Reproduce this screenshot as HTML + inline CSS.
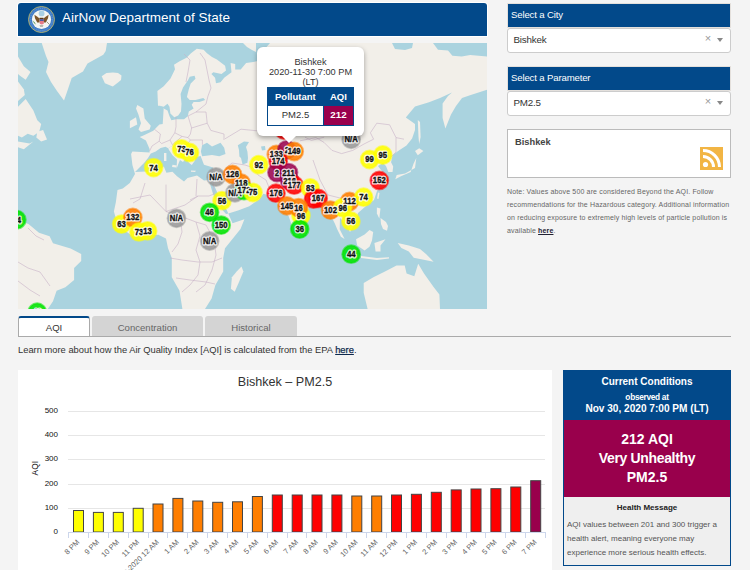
<!DOCTYPE html>
<html><head><meta charset="utf-8">
<style>
*{box-sizing:border-box;margin:0;padding:0}
html,body{width:750px;height:570px;overflow:hidden;background:#f4f4f4;font-family:"Liberation Sans",sans-serif;color:#333}
.abs{position:absolute}
#hdr{left:17px;top:2px;width:471px;height:35px;background:#fff;border-radius:4px 4px 0 0}
#hdr .in{position:absolute;left:1px;top:1px;right:1px;bottom:1px;background:#02498a;border-radius:3px 3px 0 0}
#hdr .t{position:absolute;left:44px;top:7px;font-size:13.5px;color:#fff;white-space:nowrap}
#map{left:18px;top:43px;width:469px;height:266px;overflow:hidden;background:#aad3df}
.sh{background:#02498a;color:#fff;font-size:9.6px;padding-left:3px;line-height:22.5px;letter-spacing:-0.15px;height:25px;border:1px solid #e4e0dc;white-space:nowrap}
.dd{background:#fff;border:1px solid #ccc;border-radius:3px;height:25px;font-size:9.8px;color:#333;line-height:21px;padding-left:5.5px;letter-spacing:-0.2px;position:relative}
.dd .x{position:absolute;right:19px;top:-1px;color:#999;font-size:11px}
.dd .ar{position:absolute;right:7px;top:9px;width:0;height:0;border-left:3px solid transparent;border-right:3px solid transparent;border-top:4px solid #888}
#rss{left:507px;top:129px;width:224px;height:49px;background:#fff;border:1px solid #bbb}
#note{left:507px;top:185px;width:225px;font-size:7px;line-height:13px;color:#666;letter-spacing:0.15px}
.tab{position:absolute;top:316px;height:21px;border-radius:3px 3px 0 0;font-size:9.6px;text-align:center;line-height:24.5px}
#learn{left:18px;top:344.5px;font-size:9.35px;color:#333;white-space:nowrap}
#chart{left:18px;top:370px;width:534px;height:200px;background:#fff}
#cc{left:563px;top:370px;width:168px;height:196px;border:1px solid #02498a;background:#efefef}
</style></head><body>
<div id="hdr" class="abs"><div class="in">
  <svg class="abs" style="left:10px;top:3px" width="27" height="27" viewBox="0 0 27 27">
    <circle cx="13.5" cy="13.5" r="13" fill="#3f7cc6" stroke="#b9b36a" stroke-width="0.9"/>
    <circle cx="13.5" cy="13.5" r="11" fill="none" stroke="#6a9ad8" stroke-width="1" stroke-dasharray="1 1"/>
    <circle cx="13.5" cy="13.5" r="9.6" fill="#f6f6f2"/>
    <circle cx="13.6" cy="7.4" r="2.9" fill="#a9cfe2"/>
    <path d="M6.4 8.7 L9 10.5 L11.6 12.6 L11.6 16.5 L9.2 16.6 L7 12.2Z" fill="#7b5428"/>
    <path d="M20.6 8.7 L18 10.5 L15.4 12.6 L15.4 16.5 L17.8 16.6 L20 12.2Z" fill="#7b5428"/>
    <path d="M11.5 11.8 L15.5 11.8 L15.5 13.3 L11.5 13.3Z" fill="#5b3a18"/>
    <path d="M11.8 13.2 L15.7 13.2 L15.7 17.2 Q13.75 19.6 11.8 17.2Z" fill="#e87a86"/>
    <rect x="11.8" y="13.2" width="3.9" height="1.7" fill="#3a5aa8"/>
    <path d="M4.8 14.4 Q6.5 15.5 8.2 18.8 Q5.8 18 4.8 14.4Z" fill="#3f8a3c"/>
    <path d="M18.5 15.5 L21.5 18.5" stroke="#9a9a8a" stroke-width="1"/>
    <path d="M11.5 19 L15.5 19 L14.8 21 L12.2 21Z" fill="#b8b8b0"/>
  </svg>
  <div class="t">AirNow Department of State</div>
</div></div>

<div id="map" class="abs"><svg width="469" height="266" viewBox="0 0 469 266" style="position:absolute;left:0;top:0">
<polygon points="0.0,13.5 5.8,23.2 12.5,29.0 7.7,36.7 2.0,32.8 0.0,31.0" fill="#f2efe9"/>
<polygon points="0.0,38.6 5.8,46.3 6.8,52.1 0.0,58.0" fill="#f2efe9"/>
<polygon points="0.0,63.7 7.7,56.0 15.4,67.6 19.3,77.2 23.2,81.1 21.2,88.8 15.4,92.7 9.7,90.7 3.9,94.6 0.0,92.7" fill="#f2efe9"/>
<polygon points="19.3,88.8 25.1,86.9 29.0,96.5 23.2,98.5 18.3,94.6" fill="#f2efe9"/>
<polygon points="0.0,98.5 11.6,100.4 15.4,98.5 5.8,106.2 0.0,104.3" fill="#f2efe9"/>
<polygon points="23.7,0.0 26.0,7.0 28.0,13.0 30.5,19.0 28.0,29.0 33.0,39.0 39.0,48.0 46.0,57.5 49.0,49.0 53.7,35.0 65.0,28.4 69.5,20.5 85.3,11.8 87.7,7.9 89.0,0.0" fill="#f2efe9"/>
<polygon points="83.7,33.2 88.5,30.0 95.0,29.5 100.0,30.0 103.5,32.5 103.0,37.0 100.0,39.5 94.8,43.4 86.9,40.3" fill="#f2efe9"/>
<polygon points="119.3,61.9 125.4,65.6 126.7,75.4 132.8,82.8 131.6,86.5 123.0,89.0 120.5,86.5 123.0,80.3 120.5,71.7 118.0,65.6" fill="#f2efe9"/>
<polygon points="111.9,77.9 118.0,74.2 119.3,81.6 111.9,85.3" fill="#f2efe9"/>
<polygon points="225.0,0.0 238.0,0.0 238.0,9.0 234.0,7.0 229.0,4.0" fill="#f2efe9"/>
<polygon points="140.0,62.7 139.4,47.9 145.7,43.3 152.5,35.4 157.0,26.2 156.0,21.7 161.6,18.2 168.5,14.8 173.0,10.3 178.8,5.7 185.6,6.8 189.0,10.3 192.0,12.5 194.0,14.0 198.9,16.4 207.1,22.8 208.0,27.4 203.5,31.0 195.3,29.2 193.4,31.0 197.1,34.7 198.0,40.2 202.6,39.3 206.2,34.7 213.5,29.2 212.6,20.1 217.2,21.0 217.2,26.5 222.7,26.5 228.1,20.1 233.6,19.2 240.0,18.0 246.0,7.0 252.0,0.0 374.0,0.0 377.0,6.0 387.0,7.0 394.0,5.0 395.0,0.0 415.0,0.0 420.0,6.8 430.0,7.6 434.4,12.7 443.7,13.6 452.2,11.9 469.0,13.6 469.0,46.8 452.0,52.3 444.0,55.0 438.0,63.0 433.0,71.6 427.4,85.4 424.6,75.0 424.6,60.6 430.0,53.0 434.0,49.6 422.0,55.0 411.0,59.2 397.0,63.4 387.8,74.6 392.8,78.0 397.0,81.0 397.0,87.0 394.1,95.4 388.5,102.4 380.1,108.0 374.5,112.3 373.1,119.3 375.2,123.5 374.5,129.1 370.3,129.1 368.0,123.0 365.0,120.0 360.0,123.0 366.0,131.0 364.0,139.0 359.0,148.0 356.0,157.0 348.0,163.0 340.0,170.0 338.0,179.0 332.0,189.0 328.0,181.0 322.0,175.0 321.7,186.3 326.6,196.1 322.9,193.7 319.2,186.3 316.7,180.2 313.0,173.0 307.0,167.0 300.0,161.0 294.0,160.0 288.0,169.0 282.0,181.0 278.0,189.0 274.0,183.0 270.7,173.2 263.0,164.0 256.6,157.7 250.0,152.0 245.4,150.7 241.2,156.3 231.3,163.3 220.0,167.6 210.3,170.4 214.5,180.2 226.4,176.3 222.5,186.0 207.0,205.3 205.2,215.0 205.2,228.4 197.4,242.0 193.6,255.5 187.0,266.0 164.4,266.0 161.5,247.7 153.8,234.2 153.8,214.9 150.0,205.3 148.0,195.6 140.3,191.7 115.2,193.7 99.7,182.0 95.9,168.6 97.8,159.5 99.5,147.0 104.8,145.4 111.8,140.0 117.0,131.0 114.4,122.1 113.1,111.0 114.4,108.6 131.6,109.5 131.6,106.1 127.9,97.5 121.7,93.9 125.4,92.6 135.3,87.7 141.4,81.6 144.7,81.1 145.7,65.6 141.8,62.7" fill="#f2efe9"/>
<polygon points="117.0,129.0 127.6,128.5 131.0,129.6 139.0,128.0 145.8,123.6 148.4,129.7 154.5,128.8 159.0,133.2 166.0,138.5 169.5,135.0 179.0,132.4 186.0,137.6 193.0,136.7 195.0,130.0 195.0,124.5 186.0,121.8 182.6,113.0 178.0,114.0 176.5,118.3 173.8,122.0 171.2,120.0 168.0,116.0 164.0,112.0 159.0,106.0 154.9,102.5 150.2,105.2 147.5,103.7 142.6,104.9 137.7,108.6 132.8,110.5 130.0,115.0 126.0,120.0 122.0,124.0" fill="#aad3df"/>
<polygon points="184.1,102.3 189.0,99.8 194.0,103.5 202.5,99.8 206.2,104.7 207.5,110.9 201.3,113.3 194.0,112.1 184.1,113.3 182.9,108.4" fill="#aad3df"/>
<polygon points="219.8,102.2 226.0,98.5 231.0,99.0 228.0,104.0 229.4,108.6 230.0,115.0 229.4,119.8 224.6,121.4 223.0,115.0 221.4,113.4 221.0,107.0" fill="#aad3df"/>
<polygon points="243.0,103.5 247.0,103.0 247.5,107.0 244.0,107.5" fill="#aad3df"/>
<polygon points="141.8,62.7 145.7,63.7 149.5,60.8 151.5,63.7 152.4,70.4 156.3,74.3 160.2,72.4 163.0,68.5 163.5,60.8 162.6,51.1 165.0,44.4 169.8,37.6 171.7,33.8 176.6,32.8 177.5,35.7 172.7,40.5 170.8,46.3 168.9,54.0 171.7,56.9 177.5,56.9 185.3,55.0 187.2,56.9 181.4,58.9 175.6,58.9 173.7,61.7 175.6,65.6 170.8,68.5 169.8,73.3 166.0,76.2 158.2,76.2 153.4,77.2 151.5,73.3 149.5,67.5 145.7,65.6 143.0,64.5" fill="#aad3df"/>
<polygon points="193.0,138.0 196.4,143.0 202.5,157.0 208.7,167.0 210.3,170.4 208.0,171.0 201.0,163.0 195.0,151.0 192.0,141.0" fill="#aad3df"/>
<polygon points="222.0,140.0 230.0,143.0 238.0,148.0 236.0,150.0 228.0,147.0 221.0,143.0" fill="#aad3df"/>
<polygon points="150.2,105.2 154.9,102.5 159.0,107.0 164.0,112.0 167.0,116.0 165.0,119.0 162.0,117.0 160.7,120.0 158.6,125.8 159.0,116.6 154.5,112.2 151.0,107.0" fill="#f2efe9"/>
<polygon points="154.5,121.8 159.0,122.5 158.0,124.5 154.0,124.0" fill="#f2efe9"/>
<polygon points="146.0,110.0 148.4,110.0 148.4,118.0 146.0,118.0" fill="#f2efe9"/>
<polygon points="173.0,127.5 178.0,127.8 177.0,129.0 173.0,128.8" fill="#f2efe9"/>
<polygon points="399.8,77.0 402.0,79.0 402.6,94.0 401.2,101.0 400.5,94.0" fill="#f2efe9"/>
<polygon points="397.0,108.0 401.2,105.3 405.4,108.0 399.8,112.3" fill="#f2efe9"/>
<polygon points="398.3,115.0 397.0,124.9 387.1,130.5 378.7,132.0 377.3,136.2 382.9,133.3 392.7,129.1 395.5,120.7" fill="#f2efe9"/>
<polygon points="360.0,149.5 361.5,150.0 360.5,156.0 359.0,155.5" fill="#f2efe9"/>
<polygon points="358.9,164.4 362.5,165.6 361.3,175.4 358.9,170.5" fill="#f2efe9"/>
<polygon points="362.5,175.0 368.0,179.0 370.0,183.0 369.0,187.7 365.0,186.0 363.0,181.0" fill="#f2efe9"/>
<polygon points="338.0,196.3 346.6,191.4 351.5,187.1 355.2,189.0 354.0,197.5 351.5,203.7 346.6,207.4 339.2,202.5" fill="#f2efe9"/>
<polygon points="356.4,200.0 367.5,196.3 362.5,202.5 362.5,208.6 357.6,208.6" fill="#f2efe9"/>
<polygon points="343.0,213.0 358.9,215.0 371.0,214.2 371.0,215.5 358.9,217.0 343.0,215.0" fill="#f2efe9"/>
<polygon points="379.7,200.0 390.8,202.5 402.0,206.0 408.0,211.0 415.6,218.8 402.0,216.0 395.7,214.7 390.8,208.6 383.4,205.0" fill="#f2efe9"/>
<polygon points="223.5,223.6 225.4,228.4 220.6,240.0 216.7,248.7 212.9,245.8 213.9,234.2 218.7,228.4" fill="#f2efe9"/>
<polygon points="277.0,188.0 280.0,189.0 279.5,193.0 277.0,192.0" fill="#f2efe9"/>
<polygon points="345.7,240.0 355.4,234.2 367.0,228.4 378.5,222.6 386.7,222.6 388.6,230.4 396.3,233.2 400.2,220.7 406.0,230.4 415.6,243.9 421.4,251.6 422.0,266.0 349.6,266.0 345.7,249.7" fill="#f2efe9"/>
<polygon points="0.0,177.5 10.5,181.0 21.0,189.8 31.6,193.3 35.0,200.3 52.6,205.6 63.2,210.9 63.2,218.0 56.1,225.0 56.1,237.0 47.4,244.2 38.6,247.7 35.0,258.2 29.8,266.0 0.0,266.0" fill="#f2efe9"/>
<polyline points="136.4,86.2 142.4,91.0 141.2,98.2 143.6,100.6 152.0,97.0 156.8,89.8 158.0,83.8 158.0,74.2" fill="none" stroke="#c8b2c8" stroke-width="0.6"/>
<polyline points="141.2,98.2 134.0,103.0 131.6,108.0" fill="none" stroke="#c8b2c8" stroke-width="0.6"/>
<polyline points="152.0,97.0 154.4,101.8 164.0,93.4 170.0,94.6 172.4,91.0 173.6,85.0 170.0,73.0" fill="none" stroke="#c8b2c8" stroke-width="0.6"/>
<polyline points="156.8,89.8 164.0,93.4" fill="none" stroke="#c8b2c8" stroke-width="0.6"/>
<polyline points="172.4,97.0 184.4,97.0 184.4,101.8" fill="none" stroke="#c8b2c8" stroke-width="0.6"/>
<polyline points="170.0,94.6 172.4,97.0 168.0,103.0 171.0,109.0 177.0,113.0" fill="none" stroke="#c8b2c8" stroke-width="0.6"/>
<polyline points="173.6,85.0 189.2,80.2 192.8,87.4 206.0,91.0 206.0,97.0" fill="none" stroke="#c8b2c8" stroke-width="0.6"/>
<polyline points="170.0,73.0 178.0,69.0 188.0,61.0 190.0,53.0 193.0,45.0 191.0,37.0 189.0,27.0 187.0,17.0 182.0,10.0" fill="none" stroke="#c8b2c8" stroke-width="0.6"/>
<polyline points="178.0,69.0 188.0,69.0 189.2,80.2" fill="none" stroke="#c8b2c8" stroke-width="0.6"/>
<polyline points="166.0,11.0 172.0,17.0 170.0,29.0 168.0,39.0" fill="none" stroke="#c8b2c8" stroke-width="0.6"/>
<polyline points="207.0,95.8 223.0,86.2 239.0,87.8" fill="none" stroke="#c8b2c8" stroke-width="0.6"/>
<polyline points="287.0,94.2 293.4,97.4 306.2,94.2" fill="none" stroke="#c8b2c8" stroke-width="0.6"/>
<polyline points="282.0,97.8 298.0,94.6 306.0,99.4 314.0,107.4 323.6,110.6 334.8,107.4 346.0,101.0 355.6,96.2 352.4,89.8 358.8,80.2 371.6,81.8 378.0,94.6 386.0,96.2" fill="none" stroke="#c8b2c8" stroke-width="0.6"/>
<polyline points="378.0,94.6 378.0,109.0 373.0,114.0" fill="none" stroke="#c8b2c8" stroke-width="0.6"/>
<polyline points="208.0,125.0 214.0,120.0 227.0,122.0 236.0,125.0 240.0,132.0 248.0,137.0 252.0,147.0" fill="none" stroke="#c8b2c8" stroke-width="0.6"/>
<polyline points="195.0,132.0 196.0,151.0 191.0,153.0 180.0,153.0 172.0,157.0" fill="none" stroke="#c8b2c8" stroke-width="0.6"/>
<polyline points="179.0,136.0 178.0,153.0" fill="none" stroke="#c8b2c8" stroke-width="0.6"/>
<polyline points="148.0,141.6 148.0,168.5" fill="none" stroke="#c8b2c8" stroke-width="0.6"/>
<polyline points="112.0,156.0 132.0,152.0 148.0,168.5 162.0,173.0 178.0,179.0 188.0,182.0" fill="none" stroke="#c8b2c8" stroke-width="0.6"/>
<polyline points="127.0,140.0 122.0,156.0 115.0,160.0" fill="none" stroke="#c8b2c8" stroke-width="0.6"/>
<polyline points="148.0,168.5 167.0,162.0 180.0,153.0" fill="none" stroke="#c8b2c8" stroke-width="0.6"/>
<polyline points="162.0,173.0 164.0,189.0 160.0,201.0 154.0,209.0" fill="none" stroke="#c8b2c8" stroke-width="0.6"/>
<polyline points="178.0,179.0 182.0,193.0 178.0,207.0 182.0,219.0 180.0,232.0 172.0,242.0 164.0,249.0" fill="none" stroke="#c8b2c8" stroke-width="0.6"/>
<polyline points="188.0,182.0 196.0,197.0 198.0,212.0 194.0,227.0 187.0,242.0 178.0,249.0" fill="none" stroke="#c8b2c8" stroke-width="0.6"/>
<polyline points="152.0,215.0 164.0,217.0 180.0,219.0 194.0,219.0 204.0,215.0" fill="none" stroke="#c8b2c8" stroke-width="0.6"/>
<polyline points="158.0,235.0 172.0,237.0 188.0,239.0 197.0,241.0" fill="none" stroke="#c8b2c8" stroke-width="0.6"/>
<polyline points="295.0,117.0 302.0,137.0 310.0,152.0 322.0,155.0" fill="none" stroke="#c8b2c8" stroke-width="0.6"/>
<polyline points="330.0,155.0 334.0,167.0 326.0,171.0" fill="none" stroke="#c8b2c8" stroke-width="0.6"/>
<polyline points="10.0,185.0 18.0,193.0 26.0,197.0" fill="none" stroke="#c8b2c8" stroke-width="0.6"/>
<polyline points="0.0,219.0 10.0,225.0 22.0,229.0 32.0,243.0" fill="none" stroke="#c8b2c8" stroke-width="0.6"/>
<polyline points="0.0,238.0 12.0,247.0 22.0,253.0" fill="none" stroke="#c8b2c8" stroke-width="0.6"/>
<circle cx="-1.2" cy="176.7" r="8.9" fill="#00e400" fill-opacity="0.88" stroke="#00e400" stroke-opacity="0.55" stroke-width="2"/>
<circle cx="19.2" cy="269.2" r="8.9" fill="#00e400" fill-opacity="0.88" stroke="#00e400" stroke-opacity="0.55" stroke-width="2"/>
<circle cx="135.6" cy="124.6" r="8.9" fill="#ffff00" fill-opacity="0.88" stroke="#ffff00" stroke-opacity="0.55" stroke-width="2"/>
<circle cx="163.6" cy="106.0" r="8.9" fill="#ffff00" fill-opacity="0.88" stroke="#ffff00" stroke-opacity="0.55" stroke-width="2"/>
<circle cx="171.5" cy="109.5" r="8.9" fill="#ffff00" fill-opacity="0.88" stroke="#ffff00" stroke-opacity="0.55" stroke-width="2"/>
<circle cx="198.0" cy="134.0" r="8.9" fill="#9a9a9a" fill-opacity="0.88" stroke="#9a9a9a" stroke-opacity="0.55" stroke-width="2"/>
<circle cx="103.6" cy="181.1" r="8.9" fill="#ffff00" fill-opacity="0.88" stroke="#ffff00" stroke-opacity="0.55" stroke-width="2"/>
<circle cx="114.8" cy="174.4" r="8.9" fill="#ff7e00" fill-opacity="0.88" stroke="#ff7e00" stroke-opacity="0.55" stroke-width="2"/>
<circle cx="121.0" cy="188.9" r="8.9" fill="#ffff00" fill-opacity="0.88" stroke="#ffff00" stroke-opacity="0.55" stroke-width="2"/>
<circle cx="129.6" cy="187.9" r="8.9" fill="#ffff00" fill-opacity="0.88" stroke="#ffff00" stroke-opacity="0.55" stroke-width="2"/>
<circle cx="158.5" cy="175.3" r="8.9" fill="#9a9a9a" fill-opacity="0.88" stroke="#9a9a9a" stroke-opacity="0.55" stroke-width="2"/>
<circle cx="191.6" cy="198.0" r="8.9" fill="#9a9a9a" fill-opacity="0.88" stroke="#9a9a9a" stroke-opacity="0.55" stroke-width="2"/>
<circle cx="204.0" cy="157.7" r="8.9" fill="#ffff00" fill-opacity="0.88" stroke="#ffff00" stroke-opacity="0.55" stroke-width="2"/>
<circle cx="191.6" cy="169.3" r="8.9" fill="#00e400" fill-opacity="0.88" stroke="#00e400" stroke-opacity="0.55" stroke-width="2"/>
<circle cx="203.2" cy="182.1" r="8.9" fill="#00e400" fill-opacity="0.88" stroke="#00e400" stroke-opacity="0.55" stroke-width="2"/>
<circle cx="214.5" cy="131.4" r="8.9" fill="#ff7e00" fill-opacity="0.88" stroke="#ff7e00" stroke-opacity="0.55" stroke-width="2"/>
<circle cx="223.2" cy="140.2" r="8.9" fill="#ff7e00" fill-opacity="0.88" stroke="#ff7e00" stroke-opacity="0.55" stroke-width="2"/>
<circle cx="217.0" cy="149.8" r="8.9" fill="#9a9a9a" fill-opacity="0.88" stroke="#9a9a9a" stroke-opacity="0.55" stroke-width="2"/>
<circle cx="226.0" cy="147.5" r="8.9" fill="#00e400" fill-opacity="0.88" stroke="#00e400" stroke-opacity="0.55" stroke-width="2"/>
<circle cx="235.0" cy="149.5" r="8.9" fill="#ffff00" fill-opacity="0.88" stroke="#ffff00" stroke-opacity="0.55" stroke-width="2"/>
<circle cx="240.8" cy="121.7" r="8.9" fill="#ffff00" fill-opacity="0.88" stroke="#ffff00" stroke-opacity="0.55" stroke-width="2"/>
<circle cx="266.0" cy="87.0" r="8.9" fill="#ff0000" fill-opacity="0.88" stroke="#ff0000" stroke-opacity="0.55" stroke-width="2"/>
<circle cx="258.3" cy="111.4" r="8.9" fill="#ff7e00" fill-opacity="0.88" stroke="#ff7e00" stroke-opacity="0.55" stroke-width="2"/>
<circle cx="268.8" cy="106.8" r="8.9" fill="#99004c" fill-opacity="0.85" stroke="#99004c" stroke-opacity="0.55" stroke-width="2"/>
<circle cx="276.2" cy="108.5" r="8.9" fill="#ff7e00" fill-opacity="0.88" stroke="#ff7e00" stroke-opacity="0.55" stroke-width="2"/>
<circle cx="260.2" cy="118.2" r="8.9" fill="#ff0000" fill-opacity="0.88" stroke="#ff0000" stroke-opacity="0.55" stroke-width="2"/>
<circle cx="259.0" cy="129.6" r="8.9" fill="#99004c" fill-opacity="0.85" stroke="#99004c" stroke-opacity="0.55" stroke-width="2"/>
<circle cx="270.5" cy="129.6" r="8.9" fill="#99004c" fill-opacity="0.85" stroke="#99004c" stroke-opacity="0.55" stroke-width="2"/>
<circle cx="271.6" cy="137.6" r="8.9" fill="#99004c" fill-opacity="0.85" stroke="#99004c" stroke-opacity="0.55" stroke-width="2"/>
<circle cx="276.2" cy="142.2" r="8.9" fill="#ff0000" fill-opacity="0.88" stroke="#ff0000" stroke-opacity="0.55" stroke-width="2"/>
<circle cx="258.0" cy="150.2" r="8.9" fill="#ff0000" fill-opacity="0.88" stroke="#ff0000" stroke-opacity="0.55" stroke-width="2"/>
<circle cx="292.2" cy="145.0" r="8.9" fill="#ffff00" fill-opacity="0.88" stroke="#ffff00" stroke-opacity="0.55" stroke-width="2"/>
<circle cx="295.5" cy="156.0" r="8.9" fill="#ff0000" fill-opacity="0.88" stroke="#ff0000" stroke-opacity="0.55" stroke-width="2"/>
<circle cx="300.2" cy="155.4" r="8.9" fill="#ff0000" fill-opacity="0.88" stroke="#ff0000" stroke-opacity="0.55" stroke-width="2"/>
<circle cx="268.9" cy="162.8" r="8.9" fill="#ff7e00" fill-opacity="0.88" stroke="#ff7e00" stroke-opacity="0.55" stroke-width="2"/>
<circle cx="283.0" cy="172.6" r="8.9" fill="#ffff00" fill-opacity="0.88" stroke="#ffff00" stroke-opacity="0.55" stroke-width="2"/>
<circle cx="280.5" cy="164.6" r="8.9" fill="#ff7e00" fill-opacity="0.88" stroke="#ff7e00" stroke-opacity="0.55" stroke-width="2"/>
<circle cx="281.7" cy="186.1" r="8.9" fill="#00e400" fill-opacity="0.88" stroke="#00e400" stroke-opacity="0.55" stroke-width="2"/>
<circle cx="312.5" cy="167.1" r="8.9" fill="#ff7e00" fill-opacity="0.88" stroke="#ff7e00" stroke-opacity="0.55" stroke-width="2"/>
<circle cx="331.5" cy="158.5" r="8.9" fill="#ff7e00" fill-opacity="0.88" stroke="#ff7e00" stroke-opacity="0.55" stroke-width="2"/>
<circle cx="324.7" cy="164.6" r="8.9" fill="#ffff00" fill-opacity="0.88" stroke="#ffff00" stroke-opacity="0.55" stroke-width="2"/>
<circle cx="345.6" cy="154.2" r="8.9" fill="#ffff00" fill-opacity="0.88" stroke="#ffff00" stroke-opacity="0.55" stroke-width="2"/>
<circle cx="332.9" cy="178.2" r="8.9" fill="#ffff00" fill-opacity="0.88" stroke="#ffff00" stroke-opacity="0.55" stroke-width="2"/>
<circle cx="333.2" cy="211.2" r="8.9" fill="#00e400" fill-opacity="0.88" stroke="#00e400" stroke-opacity="0.55" stroke-width="2"/>
<circle cx="361.3" cy="137.4" r="8.9" fill="#ff0000" fill-opacity="0.88" stroke="#ff0000" stroke-opacity="0.55" stroke-width="2"/>
<circle cx="351.6" cy="116.5" r="8.9" fill="#ffff00" fill-opacity="0.88" stroke="#ffff00" stroke-opacity="0.55" stroke-width="2"/>
<circle cx="364.8" cy="112.0" r="8.9" fill="#ffff00" fill-opacity="0.88" stroke="#ffff00" stroke-opacity="0.55" stroke-width="2"/>
<circle cx="333.2" cy="96.3" r="8.9" fill="#9a9a9a" fill-opacity="0.88" stroke="#9a9a9a" stroke-opacity="0.55" stroke-width="2"/>
<g transform="translate(-1.2,179.6) scale(0.84,1)"><text text-anchor="middle" font-size="9.2" font-weight="bold" fill="#fff" stroke="#fff" stroke-width="3" stroke-opacity="0.85" stroke-linejoin="round">14</text><text text-anchor="middle" font-size="9.2" font-weight="bold" fill="#111" stroke="#111" stroke-width="0.35">14</text></g>
<g transform="translate(19.2,272.1) scale(0.84,1)"><text text-anchor="middle" font-size="9.2" font-weight="bold" fill="#fff" stroke="#fff" stroke-width="3" stroke-opacity="0.85" stroke-linejoin="round">46</text><text text-anchor="middle" font-size="9.2" font-weight="bold" fill="#111" stroke="#111" stroke-width="0.35">46</text></g>
<g transform="translate(135.6,127.5) scale(0.84,1)"><text text-anchor="middle" font-size="9.2" font-weight="bold" fill="#fff" stroke="#fff" stroke-width="3" stroke-opacity="0.85" stroke-linejoin="round">74</text><text text-anchor="middle" font-size="9.2" font-weight="bold" fill="#111" stroke="#111" stroke-width="0.35">74</text></g>
<g transform="translate(163.6,108.9) scale(0.84,1)"><text text-anchor="middle" font-size="9.2" font-weight="bold" fill="#fff" stroke="#fff" stroke-width="3" stroke-opacity="0.85" stroke-linejoin="round">73</text><text text-anchor="middle" font-size="9.2" font-weight="bold" fill="#111" stroke="#111" stroke-width="0.35">73</text></g>
<g transform="translate(171.5,112.4) scale(0.84,1)"><text text-anchor="middle" font-size="9.2" font-weight="bold" fill="#fff" stroke="#fff" stroke-width="3" stroke-opacity="0.85" stroke-linejoin="round">76</text><text text-anchor="middle" font-size="9.2" font-weight="bold" fill="#111" stroke="#111" stroke-width="0.35">76</text></g>
<g transform="translate(198.0,136.9) scale(0.84,1)"><text text-anchor="middle" font-size="9.2" font-weight="bold" fill="#fff" stroke="#fff" stroke-width="3" stroke-opacity="0.85" stroke-linejoin="round">N/A</text><text text-anchor="middle" font-size="9.2" font-weight="bold" fill="#111" stroke="#111" stroke-width="0.35">N/A</text></g>
<g transform="translate(103.6,184.0) scale(0.84,1)"><text text-anchor="middle" font-size="9.2" font-weight="bold" fill="#fff" stroke="#fff" stroke-width="3" stroke-opacity="0.85" stroke-linejoin="round">63</text><text text-anchor="middle" font-size="9.2" font-weight="bold" fill="#111" stroke="#111" stroke-width="0.35">63</text></g>
<g transform="translate(114.8,177.3) scale(0.84,1)"><text text-anchor="middle" font-size="9.2" font-weight="bold" fill="#fff" stroke="#fff" stroke-width="3" stroke-opacity="0.85" stroke-linejoin="round">132</text><text text-anchor="middle" font-size="9.2" font-weight="bold" fill="#111" stroke="#111" stroke-width="0.35">132</text></g>
<g transform="translate(121.0,191.8) scale(0.84,1)"><text text-anchor="middle" font-size="9.2" font-weight="bold" fill="#fff" stroke="#fff" stroke-width="3" stroke-opacity="0.85" stroke-linejoin="round">73</text><text text-anchor="middle" font-size="9.2" font-weight="bold" fill="#111" stroke="#111" stroke-width="0.35">73</text></g>
<g transform="translate(129.6,190.8) scale(0.84,1)"><text text-anchor="middle" font-size="9.2" font-weight="bold" fill="#fff" stroke="#fff" stroke-width="3" stroke-opacity="0.85" stroke-linejoin="round">13</text><text text-anchor="middle" font-size="9.2" font-weight="bold" fill="#111" stroke="#111" stroke-width="0.35">13</text></g>
<g transform="translate(158.5,178.2) scale(0.84,1)"><text text-anchor="middle" font-size="9.2" font-weight="bold" fill="#fff" stroke="#fff" stroke-width="3" stroke-opacity="0.85" stroke-linejoin="round">N/A</text><text text-anchor="middle" font-size="9.2" font-weight="bold" fill="#111" stroke="#111" stroke-width="0.35">N/A</text></g>
<g transform="translate(191.6,200.9) scale(0.84,1)"><text text-anchor="middle" font-size="9.2" font-weight="bold" fill="#fff" stroke="#fff" stroke-width="3" stroke-opacity="0.85" stroke-linejoin="round">N/A</text><text text-anchor="middle" font-size="9.2" font-weight="bold" fill="#111" stroke="#111" stroke-width="0.35">N/A</text></g>
<g transform="translate(204.0,160.6) scale(0.84,1)"><text text-anchor="middle" font-size="9.2" font-weight="bold" fill="#fff" stroke="#fff" stroke-width="3" stroke-opacity="0.85" stroke-linejoin="round">56</text><text text-anchor="middle" font-size="9.2" font-weight="bold" fill="#111" stroke="#111" stroke-width="0.35">56</text></g>
<g transform="translate(191.6,172.2) scale(0.84,1)"><text text-anchor="middle" font-size="9.2" font-weight="bold" fill="#fff" stroke="#fff" stroke-width="3" stroke-opacity="0.85" stroke-linejoin="round">46</text><text text-anchor="middle" font-size="9.2" font-weight="bold" fill="#111" stroke="#111" stroke-width="0.35">46</text></g>
<g transform="translate(203.2,185.0) scale(0.84,1)"><text text-anchor="middle" font-size="9.2" font-weight="bold" fill="#fff" stroke="#fff" stroke-width="3" stroke-opacity="0.85" stroke-linejoin="round">150</text><text text-anchor="middle" font-size="9.2" font-weight="bold" fill="#111" stroke="#111" stroke-width="0.35">150</text></g>
<g transform="translate(214.5,134.3) scale(0.84,1)"><text text-anchor="middle" font-size="9.2" font-weight="bold" fill="#fff" stroke="#fff" stroke-width="3" stroke-opacity="0.85" stroke-linejoin="round">126</text><text text-anchor="middle" font-size="9.2" font-weight="bold" fill="#111" stroke="#111" stroke-width="0.35">126</text></g>
<g transform="translate(223.2,143.1) scale(0.84,1)"><text text-anchor="middle" font-size="9.2" font-weight="bold" fill="#fff" stroke="#fff" stroke-width="3" stroke-opacity="0.85" stroke-linejoin="round">118</text><text text-anchor="middle" font-size="9.2" font-weight="bold" fill="#111" stroke="#111" stroke-width="0.35">118</text></g>
<g transform="translate(217.0,152.7) scale(0.84,1)"><text text-anchor="middle" font-size="9.2" font-weight="bold" fill="#fff" stroke="#fff" stroke-width="3" stroke-opacity="0.85" stroke-linejoin="round">N/A</text><text text-anchor="middle" font-size="9.2" font-weight="bold" fill="#111" stroke="#111" stroke-width="0.35">N/A</text></g>
<g transform="translate(226.0,150.4) scale(0.84,1)"><text text-anchor="middle" font-size="9.2" font-weight="bold" fill="#fff" stroke="#fff" stroke-width="3" stroke-opacity="0.85" stroke-linejoin="round">172</text><text text-anchor="middle" font-size="9.2" font-weight="bold" fill="#111" stroke="#111" stroke-width="0.35">172</text></g>
<g transform="translate(235.0,152.4) scale(0.84,1)"><text text-anchor="middle" font-size="9.2" font-weight="bold" fill="#fff" stroke="#fff" stroke-width="3" stroke-opacity="0.85" stroke-linejoin="round">75</text><text text-anchor="middle" font-size="9.2" font-weight="bold" fill="#111" stroke="#111" stroke-width="0.35">75</text></g>
<g transform="translate(240.8,124.6) scale(0.84,1)"><text text-anchor="middle" font-size="9.2" font-weight="bold" fill="#fff" stroke="#fff" stroke-width="3" stroke-opacity="0.85" stroke-linejoin="round">92</text><text text-anchor="middle" font-size="9.2" font-weight="bold" fill="#111" stroke="#111" stroke-width="0.35">92</text></g>
<g transform="translate(258.3,114.3) scale(0.84,1)"><text text-anchor="middle" font-size="9.2" font-weight="bold" fill="#fff" stroke="#fff" stroke-width="3" stroke-opacity="0.85" stroke-linejoin="round">133</text><text text-anchor="middle" font-size="9.2" font-weight="bold" fill="#111" stroke="#111" stroke-width="0.35">133</text></g>
<g transform="translate(268.8,109.7) scale(0.84,1)"><text text-anchor="middle" font-size="9.2" font-weight="bold" fill="#fff" stroke="#fff" stroke-width="3" stroke-opacity="0.85" stroke-linejoin="round">2</text><text text-anchor="middle" font-size="9.2" font-weight="bold" fill="#111" stroke="#111" stroke-width="0.35">2</text></g>
<g transform="translate(276.2,111.4) scale(0.84,1)"><text text-anchor="middle" font-size="9.2" font-weight="bold" fill="#fff" stroke="#fff" stroke-width="3" stroke-opacity="0.85" stroke-linejoin="round">149</text><text text-anchor="middle" font-size="9.2" font-weight="bold" fill="#111" stroke="#111" stroke-width="0.35">149</text></g>
<g transform="translate(260.2,121.1) scale(0.84,1)"><text text-anchor="middle" font-size="9.2" font-weight="bold" fill="#fff" stroke="#fff" stroke-width="3" stroke-opacity="0.85" stroke-linejoin="round">174</text><text text-anchor="middle" font-size="9.2" font-weight="bold" fill="#111" stroke="#111" stroke-width="0.35">174</text></g>
<g transform="translate(259.0,132.5) scale(0.84,1)"><text text-anchor="middle" font-size="9.2" font-weight="bold" fill="#fff" stroke="#fff" stroke-width="3" stroke-opacity="0.85" stroke-linejoin="round">2</text><text text-anchor="middle" font-size="9.2" font-weight="bold" fill="#111" stroke="#111" stroke-width="0.35">2</text></g>
<g transform="translate(270.5,132.5) scale(0.84,1)"><text text-anchor="middle" font-size="9.2" font-weight="bold" fill="#fff" stroke="#fff" stroke-width="3" stroke-opacity="0.85" stroke-linejoin="round">211</text><text text-anchor="middle" font-size="9.2" font-weight="bold" fill="#111" stroke="#111" stroke-width="0.35">211</text></g>
<g transform="translate(271.6,140.5) scale(0.84,1)"><text text-anchor="middle" font-size="9.2" font-weight="bold" fill="#fff" stroke="#fff" stroke-width="3" stroke-opacity="0.85" stroke-linejoin="round">216</text><text text-anchor="middle" font-size="9.2" font-weight="bold" fill="#111" stroke="#111" stroke-width="0.35">216</text></g>
<g transform="translate(276.2,145.1) scale(0.84,1)"><text text-anchor="middle" font-size="9.2" font-weight="bold" fill="#fff" stroke="#fff" stroke-width="3" stroke-opacity="0.85" stroke-linejoin="round">177</text><text text-anchor="middle" font-size="9.2" font-weight="bold" fill="#111" stroke="#111" stroke-width="0.35">177</text></g>
<g transform="translate(258.0,153.1) scale(0.84,1)"><text text-anchor="middle" font-size="9.2" font-weight="bold" fill="#fff" stroke="#fff" stroke-width="3" stroke-opacity="0.85" stroke-linejoin="round">176</text><text text-anchor="middle" font-size="9.2" font-weight="bold" fill="#111" stroke="#111" stroke-width="0.35">176</text></g>
<g transform="translate(292.2,147.9) scale(0.84,1)"><text text-anchor="middle" font-size="9.2" font-weight="bold" fill="#fff" stroke="#fff" stroke-width="3" stroke-opacity="0.85" stroke-linejoin="round">83</text><text text-anchor="middle" font-size="9.2" font-weight="bold" fill="#111" stroke="#111" stroke-width="0.35">83</text></g>
<g transform="translate(295.5,158.9) scale(0.84,1)"><text text-anchor="middle" font-size="9.2" font-weight="bold" fill="#fff" stroke="#fff" stroke-width="3" stroke-opacity="0.85" stroke-linejoin="round">1</text><text text-anchor="middle" font-size="9.2" font-weight="bold" fill="#111" stroke="#111" stroke-width="0.35">1</text></g>
<g transform="translate(300.2,158.3) scale(0.84,1)"><text text-anchor="middle" font-size="9.2" font-weight="bold" fill="#fff" stroke="#fff" stroke-width="3" stroke-opacity="0.85" stroke-linejoin="round">167</text><text text-anchor="middle" font-size="9.2" font-weight="bold" fill="#111" stroke="#111" stroke-width="0.35">167</text></g>
<g transform="translate(268.9,165.7) scale(0.84,1)"><text text-anchor="middle" font-size="9.2" font-weight="bold" fill="#fff" stroke="#fff" stroke-width="3" stroke-opacity="0.85" stroke-linejoin="round">145</text><text text-anchor="middle" font-size="9.2" font-weight="bold" fill="#111" stroke="#111" stroke-width="0.35">145</text></g>
<g transform="translate(283.0,175.5) scale(0.84,1)"><text text-anchor="middle" font-size="9.2" font-weight="bold" fill="#fff" stroke="#fff" stroke-width="3" stroke-opacity="0.85" stroke-linejoin="round">96</text><text text-anchor="middle" font-size="9.2" font-weight="bold" fill="#111" stroke="#111" stroke-width="0.35">96</text></g>
<g transform="translate(280.5,167.5) scale(0.84,1)"><text text-anchor="middle" font-size="9.2" font-weight="bold" fill="#fff" stroke="#fff" stroke-width="3" stroke-opacity="0.85" stroke-linejoin="round">16</text><text text-anchor="middle" font-size="9.2" font-weight="bold" fill="#111" stroke="#111" stroke-width="0.35">16</text></g>
<g transform="translate(281.7,189.0) scale(0.84,1)"><text text-anchor="middle" font-size="9.2" font-weight="bold" fill="#fff" stroke="#fff" stroke-width="3" stroke-opacity="0.85" stroke-linejoin="round">36</text><text text-anchor="middle" font-size="9.2" font-weight="bold" fill="#111" stroke="#111" stroke-width="0.35">36</text></g>
<g transform="translate(312.5,170.0) scale(0.84,1)"><text text-anchor="middle" font-size="9.2" font-weight="bold" fill="#fff" stroke="#fff" stroke-width="3" stroke-opacity="0.85" stroke-linejoin="round">102</text><text text-anchor="middle" font-size="9.2" font-weight="bold" fill="#111" stroke="#111" stroke-width="0.35">102</text></g>
<g transform="translate(331.5,161.4) scale(0.84,1)"><text text-anchor="middle" font-size="9.2" font-weight="bold" fill="#fff" stroke="#fff" stroke-width="3" stroke-opacity="0.85" stroke-linejoin="round">112</text><text text-anchor="middle" font-size="9.2" font-weight="bold" fill="#111" stroke="#111" stroke-width="0.35">112</text></g>
<g transform="translate(324.7,167.5) scale(0.84,1)"><text text-anchor="middle" font-size="9.2" font-weight="bold" fill="#fff" stroke="#fff" stroke-width="3" stroke-opacity="0.85" stroke-linejoin="round">96</text><text text-anchor="middle" font-size="9.2" font-weight="bold" fill="#111" stroke="#111" stroke-width="0.35">96</text></g>
<g transform="translate(345.6,157.1) scale(0.84,1)"><text text-anchor="middle" font-size="9.2" font-weight="bold" fill="#fff" stroke="#fff" stroke-width="3" stroke-opacity="0.85" stroke-linejoin="round">74</text><text text-anchor="middle" font-size="9.2" font-weight="bold" fill="#111" stroke="#111" stroke-width="0.35">74</text></g>
<g transform="translate(332.9,181.1) scale(0.84,1)"><text text-anchor="middle" font-size="9.2" font-weight="bold" fill="#fff" stroke="#fff" stroke-width="3" stroke-opacity="0.85" stroke-linejoin="round">56</text><text text-anchor="middle" font-size="9.2" font-weight="bold" fill="#111" stroke="#111" stroke-width="0.35">56</text></g>
<g transform="translate(333.2,214.1) scale(0.84,1)"><text text-anchor="middle" font-size="9.2" font-weight="bold" fill="#fff" stroke="#fff" stroke-width="3" stroke-opacity="0.85" stroke-linejoin="round">44</text><text text-anchor="middle" font-size="9.2" font-weight="bold" fill="#111" stroke="#111" stroke-width="0.35">44</text></g>
<g transform="translate(361.3,140.3) scale(0.84,1)"><text text-anchor="middle" font-size="9.2" font-weight="bold" fill="#fff" stroke="#fff" stroke-width="3" stroke-opacity="0.85" stroke-linejoin="round">152</text><text text-anchor="middle" font-size="9.2" font-weight="bold" fill="#111" stroke="#111" stroke-width="0.35">152</text></g>
<g transform="translate(351.6,119.4) scale(0.84,1)"><text text-anchor="middle" font-size="9.2" font-weight="bold" fill="#fff" stroke="#fff" stroke-width="3" stroke-opacity="0.85" stroke-linejoin="round">99</text><text text-anchor="middle" font-size="9.2" font-weight="bold" fill="#111" stroke="#111" stroke-width="0.35">99</text></g>
<g transform="translate(364.8,114.9) scale(0.84,1)"><text text-anchor="middle" font-size="9.2" font-weight="bold" fill="#fff" stroke="#fff" stroke-width="3" stroke-opacity="0.85" stroke-linejoin="round">95</text><text text-anchor="middle" font-size="9.2" font-weight="bold" fill="#111" stroke="#111" stroke-width="0.35">95</text></g>
<g transform="translate(333.2,99.2) scale(0.84,1)"><text text-anchor="middle" font-size="9.2" font-weight="bold" fill="#fff" stroke="#fff" stroke-width="3" stroke-opacity="0.85" stroke-linejoin="round">N/A</text><text text-anchor="middle" font-size="9.2" font-weight="bold" fill="#111" stroke="#111" stroke-width="0.35">N/A</text></g>
</svg>
<div style="position:absolute;left:239px;top:4px;width:107px;height:89px;background:#fff;border-radius:6px;box-shadow:0 2px 5px rgba(0,0,0,0.35)">
<div style="position:absolute;left:0;right:0;top:10px;text-align:center;font-size:9.2px;line-height:10px;color:#333">Bishkek<br>2020-11-30 7:00 PM<br>(LT)</div>
<div style="position:absolute;left:10px;top:40px;width:87px;height:39px;border:1px solid #02498a">
 <div style="position:absolute;left:0;top:0;width:85px;height:18px;background:#02498a;color:#fff;font-weight:bold;font-size:9.5px;line-height:17px">
  <span style="position:absolute;left:7px">Pollutant</span><span style="position:absolute;left:62px">AQI</span></div>
 <div style="position:absolute;left:0;top:18px;width:55px;height:19px;background:#fff;color:#333;font-size:9.5px;line-height:18px;text-align:center">PM2.5</div>
 <div style="position:absolute;left:55px;top:18px;width:30px;height:19px;background:#99004c;color:#fff;font-weight:bold;font-size:9.8px;line-height:18px;text-align:center;border-left:1px solid #02498a">212</div>
</div>
</div>
<div style="position:absolute;left:264px;top:93px;width:0;height:0;border-left:7px solid transparent;border-right:7px solid transparent;border-top:7px solid #fff"></div></div>

<div class="abs" style="left:507px;top:3px;width:224px">
  <div class="sh">Select a City</div>
  <div class="dd">Bishkek<span class="x">×</span><span class="ar"></span></div>
</div>
<div class="abs" style="left:507px;top:66px;width:224px">
  <div class="sh">Select a Parameter</div>
  <div class="dd">PM2.5<span class="x">×</span><span class="ar"></span></div>
</div>
<div id="rss" class="abs">
  <div class="abs" style="left:7px;top:7px;font-size:9.3px;font-weight:bold;color:#444">Bishkek</div>
  <svg class="abs" style="left:192px;top:17px" width="23" height="23" viewBox="0 0 23 23">
    <rect width="23" height="23" fill="#f2b544"/>
    <circle cx="5.5" cy="17.5" r="2.6" fill="#fff"/>
    <path d="M3 9.5 A10.5 10.5 0 0 1 13.5 20" stroke="#fff" stroke-width="3" fill="none"/>
    <path d="M3 3.5 A16.5 16.5 0 0 1 19.5 20" stroke="#fff" stroke-width="3" fill="none"/>
  </svg>
</div>
<div id="note" class="abs">Note: Values above 500 are considered Beyond the AQI. Follow recommendations for the Hazardous category. Additional information on reducing exposure to extremely high levels of particle pollution is available <b style="color:#223;text-decoration:underline">here</b>.</div>

<div class="tab" style="left:18px;width:72px;background:#fff;border:1px solid #aaa;border-bottom:none;border-top:2px solid #02498a;color:#333;line-height:20.5px">AQI</div>
<div class="tab" style="left:92px;width:111px;background:#d4d4d4;color:#666">Concentration</div>
<div class="tab" style="left:205px;width:92px;background:#d4d4d4;color:#666">Historical</div>
<div class="abs" style="left:18px;top:336px;width:713px;height:1px;background:#aaa"></div>
<div id="learn" class="abs">Learn more about how the Air Quality Index [AQI] is calculated from the EPA <span style="text-decoration:underline;color:#0f2a4d;-webkit-text-stroke:0.25px #0f2a4d">here</span>.</div>

<div id="chart" class="abs"></div>
<svg class="abs" style="left:0;top:0" width="750" height="570" viewBox="0 0 750 570">
<line x1="68" x2="545" y1="411.5" y2="411.5" stroke="#e6e6e6" stroke-width="1"/>
<text x="58" y="413.3" text-anchor="end" font-size="8" fill="#111">500</text>
<line x1="68" x2="545" y1="435.5" y2="435.5" stroke="#e6e6e6" stroke-width="1"/>
<text x="58" y="437.3" text-anchor="end" font-size="8" fill="#111">400</text>
<line x1="68" x2="545" y1="459.5" y2="459.5" stroke="#e6e6e6" stroke-width="1"/>
<text x="58" y="461.3" text-anchor="end" font-size="8" fill="#111">300</text>
<line x1="68" x2="545" y1="484.5" y2="484.5" stroke="#e6e6e6" stroke-width="1"/>
<text x="58" y="486.3" text-anchor="end" font-size="8" fill="#111">200</text>
<line x1="68" x2="545" y1="508.5" y2="508.5" stroke="#e6e6e6" stroke-width="1"/>
<text x="58" y="510.3" text-anchor="end" font-size="8" fill="#111">100</text>
<text x="58" y="533.8" text-anchor="end" font-size="8" fill="#111">0</text>
<text transform="translate(38,468.2) rotate(-90)" text-anchor="middle" font-size="8.4" fill="#111">AQI</text>
<rect x="73.5" y="510.5" width="10" height="21.5" fill="#ffff00" stroke="#444" stroke-width="1"/>
<rect x="93.4" y="512.4" width="10" height="19.6" fill="#ffff00" stroke="#444" stroke-width="1"/>
<rect x="113.3" y="512.4" width="10" height="19.6" fill="#ffff00" stroke="#444" stroke-width="1"/>
<rect x="133.2" y="508.3" width="10" height="23.7" fill="#ffff00" stroke="#444" stroke-width="1"/>
<rect x="153.0" y="504.0" width="10" height="28.0" fill="#ff7e00" stroke="#444" stroke-width="1"/>
<rect x="172.9" y="498.4" width="10" height="33.6" fill="#ff7e00" stroke="#444" stroke-width="1"/>
<rect x="192.8" y="501.0" width="10" height="31.0" fill="#ff7e00" stroke="#444" stroke-width="1"/>
<rect x="212.7" y="502.3" width="10" height="29.7" fill="#ff7e00" stroke="#444" stroke-width="1"/>
<rect x="232.5" y="501.8" width="10" height="30.2" fill="#ff7e00" stroke="#444" stroke-width="1"/>
<rect x="252.4" y="496.5" width="10" height="35.5" fill="#ff7e00" stroke="#444" stroke-width="1"/>
<rect x="272.3" y="495.0" width="10" height="37.0" fill="#ff0000" stroke="#444" stroke-width="1"/>
<rect x="292.2" y="495.0" width="10" height="37.0" fill="#ff0000" stroke="#444" stroke-width="1"/>
<rect x="312.0" y="495.0" width="10" height="37.0" fill="#ff0000" stroke="#444" stroke-width="1"/>
<rect x="331.9" y="495.0" width="10" height="37.0" fill="#ff0000" stroke="#444" stroke-width="1"/>
<rect x="351.8" y="496.0" width="10" height="36.0" fill="#ff7e00" stroke="#444" stroke-width="1"/>
<rect x="371.7" y="496.0" width="10" height="36.0" fill="#ff7e00" stroke="#444" stroke-width="1"/>
<rect x="391.5" y="495.0" width="10" height="37.0" fill="#ff0000" stroke="#444" stroke-width="1"/>
<rect x="411.4" y="494.3" width="10" height="37.7" fill="#ff0000" stroke="#444" stroke-width="1"/>
<rect x="431.3" y="492.3" width="10" height="39.7" fill="#ff0000" stroke="#444" stroke-width="1"/>
<rect x="451.2" y="489.9" width="10" height="42.1" fill="#ff0000" stroke="#444" stroke-width="1"/>
<rect x="471.0" y="489.0" width="10" height="43.0" fill="#ff0000" stroke="#444" stroke-width="1"/>
<rect x="490.9" y="488.7" width="10" height="43.3" fill="#ff0000" stroke="#444" stroke-width="1"/>
<rect x="510.8" y="487.0" width="10" height="45.0" fill="#ff0000" stroke="#444" stroke-width="1"/>
<rect x="530.7" y="480.7" width="10" height="51.3" fill="#99004c" stroke="#444" stroke-width="1"/>
<line x1="68" x2="545" y1="532.5" y2="532.5" stroke="#ccd6eb" stroke-width="1"/>
<line x1="68.5" x2="68.5" y1="532" y2="538" stroke="#ccd6eb" stroke-width="1"/>
<line x1="88.5" x2="88.5" y1="532" y2="538" stroke="#ccd6eb" stroke-width="1"/>
<line x1="108.5" x2="108.5" y1="532" y2="538" stroke="#ccd6eb" stroke-width="1"/>
<line x1="128.5" x2="128.5" y1="532" y2="538" stroke="#ccd6eb" stroke-width="1"/>
<line x1="148.5" x2="148.5" y1="532" y2="538" stroke="#ccd6eb" stroke-width="1"/>
<line x1="167.5" x2="167.5" y1="532" y2="538" stroke="#ccd6eb" stroke-width="1"/>
<line x1="187.5" x2="187.5" y1="532" y2="538" stroke="#ccd6eb" stroke-width="1"/>
<line x1="207.5" x2="207.5" y1="532" y2="538" stroke="#ccd6eb" stroke-width="1"/>
<line x1="227.5" x2="227.5" y1="532" y2="538" stroke="#ccd6eb" stroke-width="1"/>
<line x1="247.5" x2="247.5" y1="532" y2="538" stroke="#ccd6eb" stroke-width="1"/>
<line x1="267.5" x2="267.5" y1="532" y2="538" stroke="#ccd6eb" stroke-width="1"/>
<line x1="287.5" x2="287.5" y1="532" y2="538" stroke="#ccd6eb" stroke-width="1"/>
<line x1="306.5" x2="306.5" y1="532" y2="538" stroke="#ccd6eb" stroke-width="1"/>
<line x1="326.5" x2="326.5" y1="532" y2="538" stroke="#ccd6eb" stroke-width="1"/>
<line x1="346.5" x2="346.5" y1="532" y2="538" stroke="#ccd6eb" stroke-width="1"/>
<line x1="366.5" x2="366.5" y1="532" y2="538" stroke="#ccd6eb" stroke-width="1"/>
<line x1="386.5" x2="386.5" y1="532" y2="538" stroke="#ccd6eb" stroke-width="1"/>
<line x1="406.5" x2="406.5" y1="532" y2="538" stroke="#ccd6eb" stroke-width="1"/>
<line x1="426.5" x2="426.5" y1="532" y2="538" stroke="#ccd6eb" stroke-width="1"/>
<line x1="446.5" x2="446.5" y1="532" y2="538" stroke="#ccd6eb" stroke-width="1"/>
<line x1="466.5" x2="466.5" y1="532" y2="538" stroke="#ccd6eb" stroke-width="1"/>
<line x1="485.5" x2="485.5" y1="532" y2="538" stroke="#ccd6eb" stroke-width="1"/>
<line x1="505.5" x2="505.5" y1="532" y2="538" stroke="#ccd6eb" stroke-width="1"/>
<line x1="525.5" x2="525.5" y1="532" y2="538" stroke="#ccd6eb" stroke-width="1"/>
<line x1="545.5" x2="545.5" y1="532" y2="538" stroke="#ccd6eb" stroke-width="1"/>
<text transform="translate(79.9,542.5) rotate(-45)" text-anchor="end" font-size="7.5" fill="#666">8 PM</text>
<text transform="translate(99.8,542.5) rotate(-45)" text-anchor="end" font-size="7.5" fill="#666">9 PM</text>
<text transform="translate(119.7,542.5) rotate(-45)" text-anchor="end" font-size="7.5" fill="#666">10 PM</text>
<text transform="translate(139.6,542.5) rotate(-45)" text-anchor="end" font-size="7.5" fill="#666">11 PM</text>
<text transform="translate(159.4,542.5) rotate(-45)" text-anchor="end" font-size="7.5" fill="#666">11-30-2020 12 AM</text>
<text transform="translate(179.3,542.5) rotate(-45)" text-anchor="end" font-size="7.5" fill="#666">1 AM</text>
<text transform="translate(199.2,542.5) rotate(-45)" text-anchor="end" font-size="7.5" fill="#666">2 AM</text>
<text transform="translate(219.1,542.5) rotate(-45)" text-anchor="end" font-size="7.5" fill="#666">3 AM</text>
<text transform="translate(238.9,542.5) rotate(-45)" text-anchor="end" font-size="7.5" fill="#666">4 AM</text>
<text transform="translate(258.8,542.5) rotate(-45)" text-anchor="end" font-size="7.5" fill="#666">5 AM</text>
<text transform="translate(278.7,542.5) rotate(-45)" text-anchor="end" font-size="7.5" fill="#666">6 AM</text>
<text transform="translate(298.6,542.5) rotate(-45)" text-anchor="end" font-size="7.5" fill="#666">7 AM</text>
<text transform="translate(318.4,542.5) rotate(-45)" text-anchor="end" font-size="7.5" fill="#666">8 AM</text>
<text transform="translate(338.3,542.5) rotate(-45)" text-anchor="end" font-size="7.5" fill="#666">9 AM</text>
<text transform="translate(358.2,542.5) rotate(-45)" text-anchor="end" font-size="7.5" fill="#666">10 AM</text>
<text transform="translate(378.1,542.5) rotate(-45)" text-anchor="end" font-size="7.5" fill="#666">11 AM</text>
<text transform="translate(397.9,542.5) rotate(-45)" text-anchor="end" font-size="7.5" fill="#666">12 PM</text>
<text transform="translate(417.8,542.5) rotate(-45)" text-anchor="end" font-size="7.5" fill="#666">1 PM</text>
<text transform="translate(437.7,542.5) rotate(-45)" text-anchor="end" font-size="7.5" fill="#666">2 PM</text>
<text transform="translate(457.6,542.5) rotate(-45)" text-anchor="end" font-size="7.5" fill="#666">3 PM</text>
<text transform="translate(477.4,542.5) rotate(-45)" text-anchor="end" font-size="7.5" fill="#666">4 PM</text>
<text transform="translate(497.3,542.5) rotate(-45)" text-anchor="end" font-size="7.5" fill="#666">5 PM</text>
<text transform="translate(517.2,542.5) rotate(-45)" text-anchor="end" font-size="7.5" fill="#666">6 PM</text>
<text transform="translate(537.1,542.5) rotate(-45)" text-anchor="end" font-size="7.5" fill="#666">7 PM</text>
<text x="285" y="386" text-anchor="middle" font-size="12.6" fill="#333">Bishkek – PM2.5</text>
</svg>

<div id="cc" class="abs">
  <div style="background:#02498a;height:49px;color:#fff;font-weight:bold;text-align:center">
    <div style="font-size:10px;padding-top:5px;line-height:12px">Current Conditions</div>
    <div style="font-size:8.3px;line-height:14px;letter-spacing:-0.3px;position:relative;top:1.5px">observed at</div>
    <div style="font-size:10.1px;line-height:13px">Nov 30, 2020 7:00 PM (LT)</div>
  </div>
  <div style="background:#99004c;height:77px;color:#fff;font-weight:bold;text-align:center;font-size:14px;line-height:19px;padding-top:10px">212 AQI<br><span style="letter-spacing:-0.35px">Very Unhealthy</span><br>PM2.5</div>
  <div style="text-align:center;font-weight:bold;font-size:8px;color:#222;padding-top:6px">Health Message</div>
  <div style="font-size:8px;color:#555;line-height:13.9px;padding:6px 3px 0 3px">AQI values between 201 and 300 trigger a health alert, meaning everyone may experience more serious health effects.</div>
</div>
</body></html>
